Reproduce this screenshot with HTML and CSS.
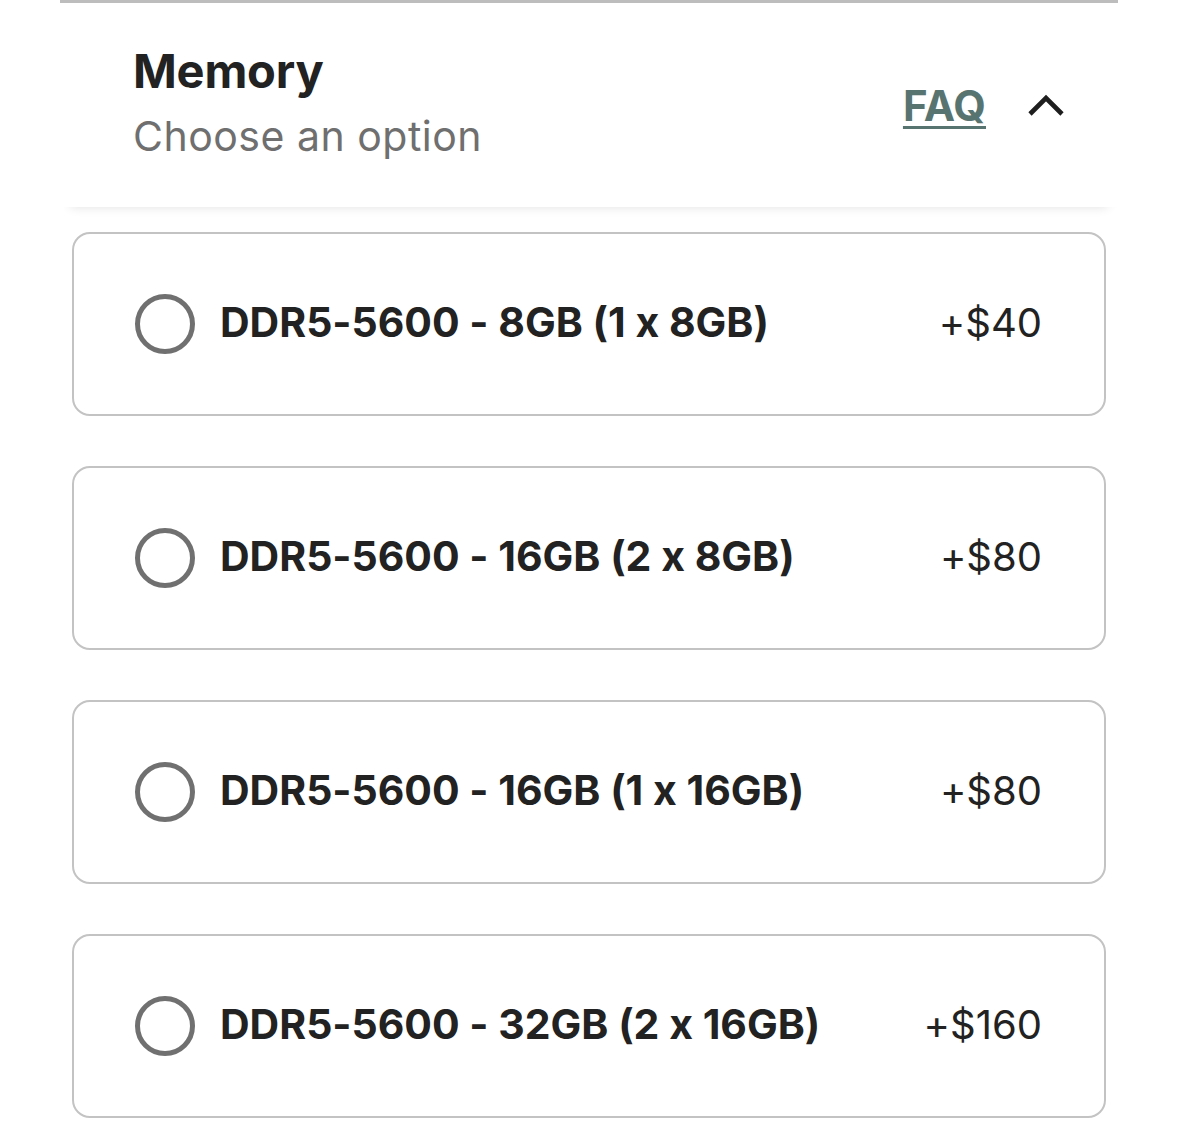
FILE: index.html
```html
<!DOCTYPE html>
<html lang="en">
<head>
    <meta charset="UTF-8">
    <meta name="viewport" content="width=device-width, initial-scale=1.0">
    <title>Memory options</title>
    <link rel="stylesheet" href="styles.css">
</head>
<body>

<div class="panel">
    <div class="panel-header">
        <div class="titles">
            <h2 class="title">Memory</h2>
            <p class="subtitle">Choose an option</p>
        </div>
        <div class="header-actions">
            <a href="#" class="faq">FAQ</a>
            <button class="toggle" aria-label="Collapse">
                <svg width="36" height="24" viewBox="0 0 36 24">
                    <polyline points="2,21 18,5 34,21" fill="none" stroke="#1e1e1e" stroke-width="4.6"/>
                </svg>
            </button>
        </div>
    </div>

    <div class="options">
        <label class="option">
            <span class="radio"></span>
            <span class="option-name">DDR5-5600 - 8GB (1 x 8GB)</span>
            <span class="option-price">+$40</span>
        </label>
        <label class="option">
            <span class="radio"></span>
            <span class="option-name">DDR5-5600 - 16GB (2 x 8GB)</span>
            <span class="option-price">+$80</span>
        </label>
        <label class="option">
            <span class="radio"></span>
            <span class="option-name">DDR5-5600 - 16GB (1 x 16GB)</span>
            <span class="option-price">+$80</span>
        </label>
        <label class="option">
            <span class="radio"></span>
            <span class="option-name">DDR5-5600 - 32GB (2 x 16GB)</span>
            <span class="option-price">+$160</span>
        </label>
    </div>
</div>

</body>
</html>
```

FILE: styles.css
```css
body {
    font-family: Inter, "Open Sans", sans-serif;
    font-feature-settings: "calt" 0;
    margin: 0;
    padding: 0;
    background: #fff;
    color: #222;
}
.panel {
    margin: 0 61px 0 60px;
    border-top: 3px solid #bdbdbd;
}
.panel-header {
    display: flex;
    justify-content: space-between;
    align-items: center;
    height: 204px;
    padding: 0 54px 0 73px;
    box-shadow: 0 10px 10px -10px rgba(0, 0, 0, 0.12);
}
.title {
    margin: 0;
    font-size: 47px;
    font-weight: 700;
    line-height: 56px;
    letter-spacing: -0.2px;
    margin-top: -6px;
}
.subtitle {
    margin: 12px 0 0;
    font-size: 41px;
    line-height: 50px;
    letter-spacing: 0.5px;
    color: #6f6f6f;
}
.header-actions {
    display: flex;
    align-items: center;
    gap: 42px;
}
.faq {
    color: #587471;
    font-size: 42px;
    font-weight: 700;
    text-decoration: underline;
    text-decoration-thickness: 3px;
    text-underline-offset: 5px;
}
.toggle {
    background: none;
    border: none;
    padding: 0;
    display: flex;
}
.options {
    display: flex;
    flex-direction: column;
    gap: 50px;
    margin: 25px 12px 0;
}
.option {
    display: flex;
    align-items: center;
    height: 180px;
    padding: 0 62px 0 61px;
    border: 2px solid #c3c3c3;
    border-radius: 18px;
}
.radio {
    width: 50px;
    height: 50px;
    border: 5px solid #707070;
    border-radius: 50%;
    flex-shrink: 0;
}
.option-name {
    margin-left: 25px;
    margin-top: -4px;
    font-size: 41px;
    font-weight: 700;
    flex: 1;
}
.option-price {
    margin-top: -4px;
    font-size: 40px;
    font-weight: 400;
}
```
